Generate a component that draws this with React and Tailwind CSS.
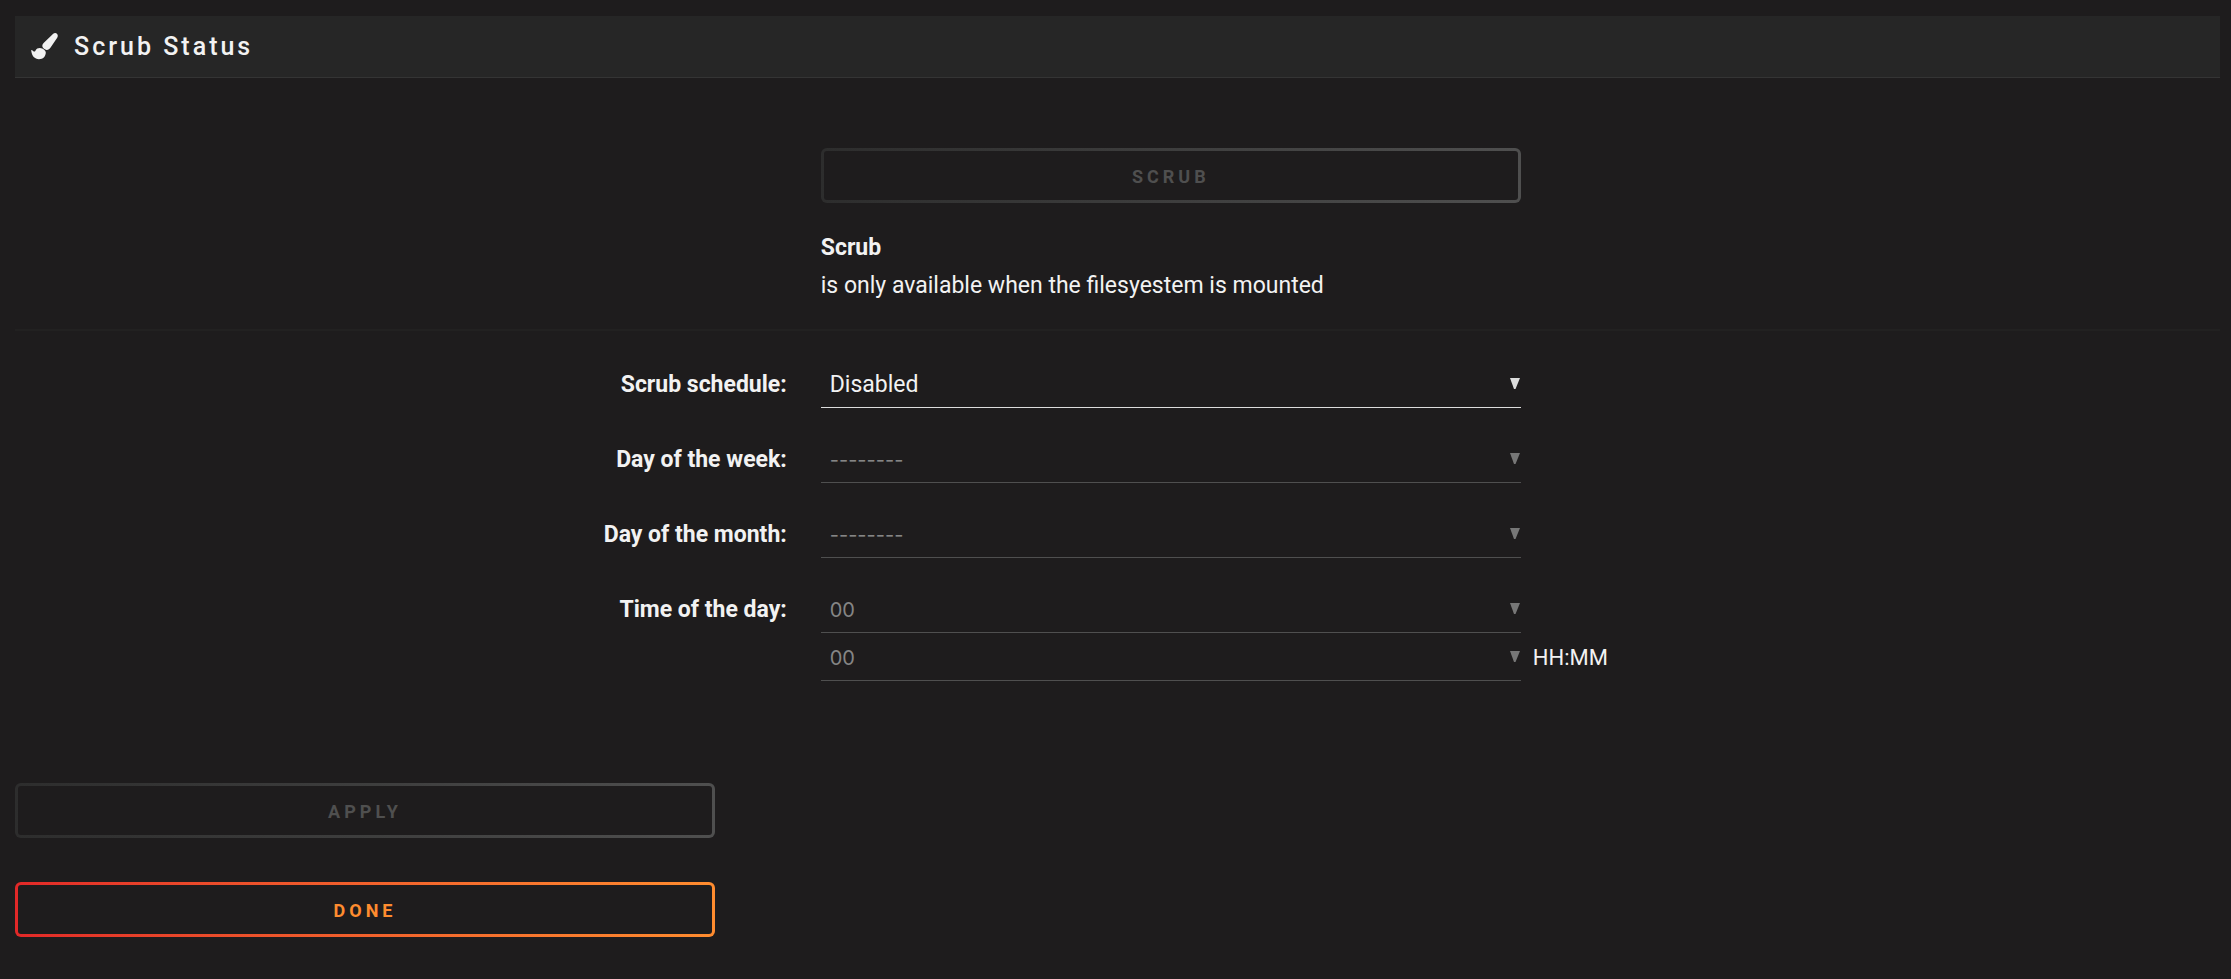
function BrushIcon() {
  return (
    <svg viewBox="0 0 27 27" aria-hidden="true" className="h-[27px] w-[27px] fill-current">
      <path d="M22.2 .8C23.6-.4 25.4-.1 26.3 1.2C27 2.2 26.9 3.4 26.2 4.7L19.6 14.6C18.5 16.2 17.2 17 15.6 16.9C13.9 16.8 11.8 15.1 11.4 13.6C11.1 12.3 11.7 11 12.9 9.8Z" />
      <path d="M8.8 14.9C10.6 14.9 11.9 15.6 13.1 16.8C14.2 17.8 14.9 18.6 14.8 19.8C14.6 23.6 12 26.2 8 26.2C3.6 26.2 .9 23.2 .2 17.6C.2 17 .7 16.8 1.2 17.2C2.1 18 2.6 18.6 3.4 18.6C4 18.6 4.3 18 4.7 17.2C5.5 15.6 6.8 14.9 8.8 14.9Z" />
    </svg>
  );
}

function OutlineButton({ children, disabled }) {
  return (
    <button
      type="button"
      disabled={disabled}
      className={
        "block w-full max-w-[700px] rounded-md p-[3px] text-lg font-bold uppercase leading-[25px] tracking-[4px] " +
        (disabled
          ? "bg-linear-to-r from-[#2d2d2d] to-[#4f4f4f] text-[#4f4f4f]"
          : "bg-linear-to-r from-[#e22828] to-[#ff8c2f] text-[#ff8c2f]")
      }
    >
      <span className="block rounded-[3px] bg-[#1e1c1d] px-4 pb-[11px] pt-[13px]">{children}</span>
    </button>
  );
}

function Field({ id, label, value, disabled, suffix }) {
  return (
    <div className="flex items-center">
      <div className="w-[35%] shrink-0 pt-0.5 text-right font-bold">
        {label && <label htmlFor={id}>{label}</label>}
      </div>
      <div className="ml-[34px] flex grow items-center gap-3">
        <div
          className={
            "relative w-full max-w-[700px] border-b " +
            (disabled
              ? "border-[#4f4f4f] font-['Inter',sans-serif] text-[20px] text-[#858585]"
              : "border-[#dcdcdc]")
          }
        >
          <select
            id={id}
            aria-label={label ? undefined : "Minutes"}
            disabled={disabled}
            className="block h-[47px] w-full appearance-none bg-transparent px-[9px] pt-0.5 opacity-100"
          >
            <option>{value}</option>
          </select>
          <svg
            viewBox="0 0 10 11"
            className={
              "pointer-events-none absolute right-px top-[18px] h-[11px] w-[10px] " +
              (disabled ? "fill-[#777]" : "fill-[#dcdcdc]")
            }
          >
            <path d="M0 0H10L5.5 11H4Z" />
          </svg>
        </div>
        {suffix && <span className="pt-0.5 text-[22px]">{suffix}</span>}
      </div>
    </div>
  );
}

export default function App() {
  return (
    <main className="min-h-screen bg-[#1e1c1d] py-4 pl-[15px] pr-[11px] font-['Roboto',sans-serif] text-[23px] leading-[38px] text-[#f2f2f2]">
      <h1 className="flex h-[62px] items-center gap-4 border-b border-[#343434] bg-[#262626] pl-4 text-[25px] font-medium tracking-[3px]">
        <BrushIcon />
        Scrub Status
      </h1>

      <form onSubmit={(e) => e.preventDefault()}>
        <section className="ml-[35%] pl-[34px] pt-[70px]">
          <OutlineButton disabled>Scrub</OutlineButton>
          <p className="mt-[26px]">
            <strong className="block font-bold">Scrub</strong>
            is only available when the filesyestem is mounted
          </p>
        </section>

        <hr className="mt-6 h-0.5 border-0 bg-[#222121]" />

        <section className="mt-[29px] flex flex-col gap-[27px]">
          <Field id="schedule" label="Scrub schedule:" value="Disabled" />
          <Field id="weekday" label="Day of the week:" value="--------" disabled />
          <Field id="monthday" label="Day of the month:" value="--------" disabled />
          <div className="flex flex-col">
            <Field id="hour" label="Time of the day:" value="00" disabled />
            <Field id="minute" value="00" disabled suffix="HH:MM" />
          </div>
        </section>

        <section className="mt-[102px] flex flex-col gap-11">
          <OutlineButton disabled>Apply</OutlineButton>
          <OutlineButton>Done</OutlineButton>
        </section>
      </form>
    </main>
  );
}
